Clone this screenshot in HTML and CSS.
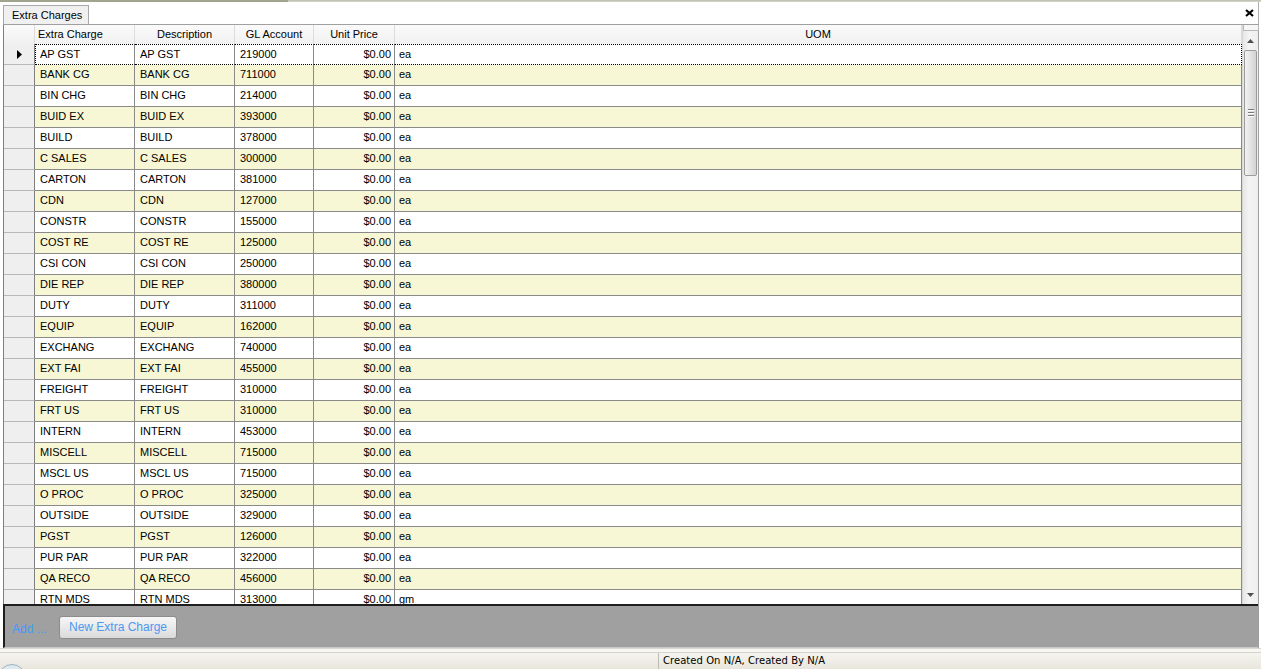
FILE: index.html
```html
<!DOCTYPE html>
<html>
<head>
<meta charset="utf-8">
<link rel="stylesheet" href="styles.css">
</head>
<body>
<div class="topline"><div class="topline-dark"></div></div>
<div class="tabbar">
  <div class="tab">Extra Charges</div>
  <div class="close">
    <svg width="9" height="8" viewBox="0 0 9 8"><path d="M1 1 L8 7 M8 1 L1 7" stroke="#000" stroke-width="2.2"/></svg>
  </div>
</div>
<div class="frame">
  <div class="grid">
    <div class="gridmain">
      <div class="hrow">
        <div class="c rh"></div>
        <div class="c c1 hl">Extra Charge</div>
        <div class="c c2 hc">Description</div>
        <div class="c c3 hc">GL Account</div>
        <div class="c c4 hc">Unit Price</div>
        <div class="c c5 hc">UOM</div>
      </div>
      <div class="body" id="body"></div>
    </div>
    <div class="vscroll">
      <div class="sb-cap"></div>
      <div class="sb-btn"><svg width="7" height="4" viewBox="0 0 7 4"><path d="M0 4 L3.5 0 L7 4 Z" fill="#505050"/></svg></div>
      <div class="sb-thumb"><div class="grip"></div><div class="grip"></div><div class="grip"></div></div>
      <div class="sb-track"></div>
      <div class="sb-btn"><svg width="7" height="4" viewBox="0 0 7 4"><path d="M0 0 L7 0 L3.5 4 Z" fill="#505050"/></svg></div>
    </div>
  </div>
  <div class="panel">
    <span class="addlink">Add ...</span>
    <button class="btn">New Extra Charge</button>
  </div>
</div>
<div class="gap"></div>
<div class="status">
  <div class="orb"></div>
  <div class="st-left"></div>
  <div class="st-text">Created On N/A, Created By N/A</div>
</div>
<script src="app.js"></script>
</body>
</html>
```
FILE: app.js
```js
var data = [
["AP GST","AP GST","219000","ea"],
["BANK CG","BANK CG","711000","ea"],
["BIN CHG","BIN CHG","214000","ea"],
["BUID EX","BUID EX","393000","ea"],
["BUILD","BUILD","378000","ea"],
["C SALES","C SALES","300000","ea"],
["CARTON","CARTON","381000","ea"],
["CDN","CDN","127000","ea"],
["CONSTR","CONSTR","155000","ea"],
["COST RE","COST RE","125000","ea"],
["CSI CON","CSI CON","250000","ea"],
["DIE REP","DIE REP","380000","ea"],
["DUTY","DUTY","311000","ea"],
["EQUIP","EQUIP","162000","ea"],
["EXCHANG","EXCHANG","740000","ea"],
["EXT FAI","EXT FAI","455000","ea"],
["FREIGHT","FREIGHT","310000","ea"],
["FRT US","FRT US","310000","ea"],
["INTERN","INTERN","453000","ea"],
["MISCELL","MISCELL","715000","ea"],
["MSCL US","MSCL US","715000","ea"],
["O PROC","O PROC","325000","ea"],
["OUTSIDE","OUTSIDE","329000","ea"],
["PGST","PGST","126000","ea"],
["PUR PAR","PUR PAR","322000","ea"],
["QA RECO","QA RECO","456000","ea"],
["RTN MDS","RTN MDS","313000","gm"]
];
var body = document.getElementById("body");
var html = "";
data.forEach(function (r, i) {
  var cls = "row" + (i % 2 ? " alt" : "") + (i === 0 ? " focus" : "");
  html += '<div class="' + cls + '">' +
    '<div class="c rh">' + (i === 0 ? '<svg width="5" height="9" viewBox="0 0 5 9"><path d="M0 0 L5 4.5 L0 9 Z" fill="#000"/></svg>' : '') + '</div>' +
    '<div class="c c1">' + r[0] + '</div>' +
    '<div class="c c2">' + r[1] + '</div>' +
    '<div class="c c3">' + r[2] + '</div>' +
    '<div class="c c4 num">$0.00</div>' +
    '<div class="c c5">' + r[3] + '</div>' +
    '</div>';
});
body.innerHTML = html;
```
FILE: styles.css
```css
* { box-sizing: border-box; }
html, body { margin: 0; padding: 0; }
body {
  width: 1261px;
  height: 669px;
  overflow: hidden;
  background: #ffffff;
  font-family: "Liberation Sans", Arial, sans-serif;
  font-size: 11px;
  color: #000;
}
.topline {
  height: 2px;
  background: #d2d2c4;
  border-top: 1px solid #c4c4b4;
}
.topline-dark {
  width: 288px;
  height: 2px;
  margin-top: -1px;
  background: #a2a38e;
}
.tabbar {
  height: 22px;
  display: flex;
  align-items: flex-end;
  padding-left: 3px;
  border-right: 1px solid #b0b0b0;
  width: 1259px;
  position: relative;
}
.tab {
  height: 19px;
  width: 86px;
  background: #f0f0f0;
  border: 1px solid #a8a8a8;
  border-bottom: none;
  padding: 2px 0 0 8px;
  font-size: 11px;
  line-height: 14px;
}
.close {
  margin-left: auto;
  margin-right: 4px;
  align-self: flex-start;
  margin-top: 7px;
  line-height: 0;
}
.frame {
  margin-left: 3px;
  width: 1256px;
  border-top: 1px solid #a0a0a0;
  border-right: 1px solid #a0a0a0;
}
.grid {
  display: flex;
  height: 579px;
  border-left: 1px solid #7f7f7f;
}
.gridmain {
  width: 1238px;
  overflow: hidden;
  display: flex;
  flex-direction: column;
}
.hrow {
  display: flex;
  height: 19px;
  background: linear-gradient(#fafafa, #f1f1f1);
  flex: none;
}
.hrow .c {
  border-right: 1px solid #dcdcdc;
  line-height: 18px;
}
.hl { padding-left: 3px; }
.hc { text-align: center; }
.body { flex: 1; overflow: hidden; }
.row {
  display: flex;
  height: 21px;
  background: #ffffff;
}
.row.alt { background: #f7f7d5; }
.c {
  flex: none;
  height: 100%;
  white-space: nowrap;
  overflow: hidden;
}
.row .c {
  border-right: 1px solid #8a8a8a;
  border-bottom: 1px solid #8a8a8a;
  padding-left: 5px;
  line-height: 19px;
}
.row .rh {
  background: #efefef;
  border-right: 1px solid #7f7f7f;
  border-bottom: 1px solid #b8b8b8;
  padding-left: 13px;
  display: flex;
  align-items: center;
}
.row .num { text-align: right; padding-left: 0; padding-right: 3px; }
.row .c5 { padding-left: 4px; }
.rh { width: 31px; }
.hrow .rh { border-right: 1px solid #dcdcdc; }
.c1 { width: 100px; }
.c2 { width: 100px; }
.c3 { width: 79px; }
.c4 { width: 81px; }
.c5 { width: 847px; }
.row.focus .c:not(.rh) {
  border-top: 1px dotted #000;
  border-bottom: 1px dotted #000;
  line-height: 18px;
}
.row.focus .c1 { border-left: 1px dotted #000; padding-left: 4px; }
.row.focus .c5 { border-right: 1px dotted #000; }
.vscroll {
  width: 16px;
  flex: none;
  display: flex;
  flex-direction: column;
  align-items: center;
  background: linear-gradient(90deg, #e6e6e6, #f4f4f4 40%, #eeeeee);
  border-left: 1px solid #d8d8d8;
}
.sb-cap {
  width: 16px;
  height: 6px;
  border: 1px solid #b8b8b8;
  border-top: none;
  background: #f6f6f6;
}
.sb-btn {
  height: 19px;
  display: flex;
  align-items: center;
  justify-content: center;
  width: 16px;
}
.sb-thumb {
  width: 13px;
  height: 126px;
  border: 1px solid #9c9c9c;
  border-radius: 2px;
  background: linear-gradient(90deg, #f2f2f2, #e3e3e3 50%, #d3d3d3);
  display: flex;
  flex-direction: column;
  align-items: center;
  justify-content: center;
  gap: 1px;
}
.grip { width: 6px; background: #7a7a7a; border-bottom: 1px solid #fff; height: 2px; }
.sb-track { flex: 1; }
.panel {
  height: 44px;
  background: #a0a0a0;
  border-top: 2px solid #1e1e1e;
  border-left: 2px solid #1e1e1e;
  border-bottom: 1px solid #c8c8c8;
  display: flex;
  align-items: center;
  padding-left: 7px;
}
.addlink {
  color: #3f9cff;
  font-size: 12px;
  margin-top: 4px;
  width: 47px;
}
.btn {
  font-family: "Liberation Sans", Arial, sans-serif;
  font-size: 12px;
  color: #4a9af2;
  width: 118px;
  height: 23px;
  border: 1px solid #8c8c8c;
  border-radius: 3px;
  background: linear-gradient(#f6f6f6, #e9e9e9 50%, #dadada);
  padding: 0;
  margin-top: 1px;
}
.gap {
  height: 4px;
  background: #f6f6f2;
  border-top: 1px solid #d8d8d0;
}
.status {
  height: 17px;
  display: flex;
  background: linear-gradient(#f5f4ef, #e8e6dc);
  border-top: 1px solid #d6d4c8;
  position: relative;
  overflow: hidden;
}
.st-left {
  width: 659px;
  border-right: 1px solid #bdbcb0;
}
.st-text {
  padding-left: 4px;
  line-height: 15px;
  font-family: "DejaVu Sans", Tahoma, sans-serif;
  font-size: 10px;
  letter-spacing: 0.05px;
}
.orb {
  position: absolute;
  left: -2px;
  top: 11px;
  width: 28px;
  height: 28px;
  border-radius: 50%;
  border: 1px solid #9fb3c4;
  background: #dfe8ee;
}
```
